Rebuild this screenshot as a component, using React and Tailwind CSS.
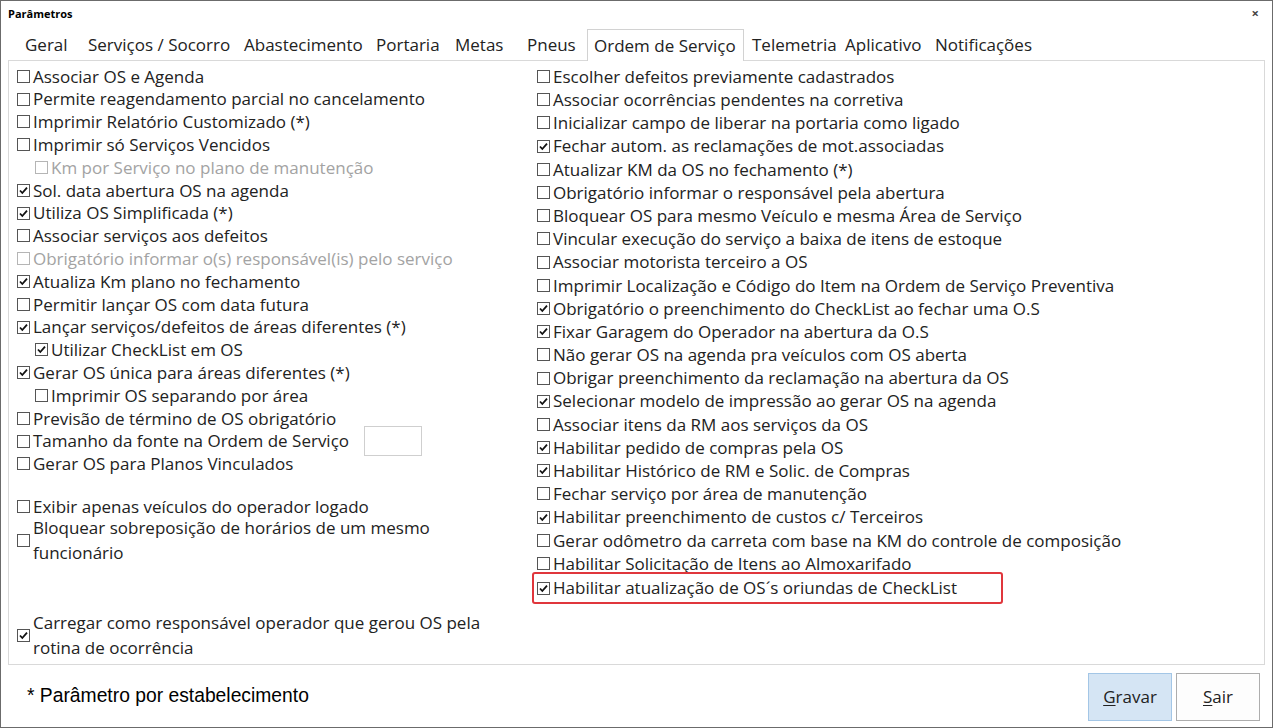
import React from 'react';

const left = [
  { t: 'Associar OS e Agenda' },
  { t: 'Permite reagendamento parcial no cancelamento' },
  { t: 'Imprimir Relatório Customizado (*)' },
  { t: 'Imprimir só Serviços Vencidos' },
  { t: 'Km por Serviço no plano de manutenção', indent: true, disabled: true },
  { t: 'Sol. data abertura OS na agenda', c: true },
  { t: 'Utiliza OS Simplificada (*)', c: true },
  { t: 'Associar serviços aos defeitos' },
  { t: 'Obrigatório informar o(s) responsável(is) pelo serviço', disabled: true },
  { t: 'Atualiza Km plano no fechamento', c: true },
  { t: 'Permitir lançar OS com data futura' },
  { t: 'Lançar serviços/defeitos de áreas diferentes (*)', c: true },
  { t: 'Utilizar CheckList em OS', indent: true, c: true },
  { t: 'Gerar OS única para áreas diferentes (*)', c: true },
  { t: 'Imprimir OS separando por área', indent: true },
  { t: 'Previsão de término de OS obrigatório' },
  { t: 'Tamanho da fonte na Ordem de Serviço', input: true },
  { t: 'Gerar OS para Planos Vinculados' },
];

const right = [
  { t: 'Escolher defeitos previamente cadastrados' },
  { t: 'Associar ocorrências pendentes na corretiva' },
  { t: 'Inicializar campo de liberar na portaria como ligado' },
  { t: 'Fechar autom. as reclamações de mot.associadas', c: true },
  { t: 'Atualizar KM da OS no fechamento (*)' },
  { t: 'Obrigatório informar o responsável pela abertura' },
  { t: 'Bloquear OS para mesmo Veículo e mesma Área de Serviço' },
  { t: 'Vincular execução do serviço a baixa de itens de estoque' },
  { t: 'Associar motorista terceiro a OS' },
  { t: 'Imprimir Localização e Código do Item na Ordem de Serviço Preventiva' },
  { t: 'Obrigatório o preenchimento do CheckList ao fechar uma O.S', c: true },
  { t: 'Fixar Garagem do Operador na abertura da O.S', c: true },
  { t: 'Não gerar OS na agenda pra veículos com OS aberta' },
  { t: 'Obrigar preenchimento da reclamação na abertura da OS' },
  { t: 'Selecionar modelo de impressão ao gerar OS na agenda', c: true },
  { t: 'Associar itens da RM aos serviços da OS' },
  { t: 'Habilitar pedido de compras pela OS', c: true },
  { t: 'Habilitar Histórico de RM e Solic. de Compras', c: true },
  { t: 'Fechar serviço por área de manutenção' },
  { t: 'Habilitar preenchimento de custos c/ Terceiros', c: true },
  { t: 'Gerar odômetro da carreta com base na KM do controle de composição' },
  { t: 'Habilitar Solicitação de Itens ao Almoxarifado' },
];

const tabs = [
  { t: 'Geral', w: 'w-[65px]', pl: 'pl-[8px]' },
  { t: 'Serviços / Socorro', w: 'w-[156px]', pl: 'pl-[6px]' },
  { t: 'Abastecimento', w: 'w-[132px]', pl: 'pl-[6px]' },
  { t: 'Portaria', w: 'w-[78px]', pl: 'pl-[6px]' },
  { t: 'Metas', w: 'w-[72px]', pl: 'pl-[7px]' },
  { t: 'Pneus', w: 'w-[67px]', pl: 'pl-[7px]' },
  { t: 'Ordem de Serviço', w: 'w-[157px]', pl: 'pl-[6px]', active: true },
  { t: 'Telemetria', w: 'w-[95px]', pl: 'pl-[8px]' },
  { t: 'Aplicativo', w: 'w-[90px]', pl: 'pl-[6px]' },
  { t: 'Notificações', w: 'w-[111px]', pl: 'pl-[6px]' },
];

function Box({ checked, disabled }) {
  return (
    <svg width="13" height="13" viewBox="0 0 13 13" className="shrink-0">
      <rect x="0.5" y="0.5" width="12" height="12" fill="#fff" stroke={disabled ? '#b5b5b5' : '#555'} />
      {checked && <path d="M3 6.5 L5.3 9 L10 3.6" fill="none" stroke="#111" strokeWidth="1.8" />}
    </svg>
  );
}

function Row({ item, h }) {
  return (
    <div className={`flex items-center gap-[3px] ${h} ${item.indent ? 'pl-[18px]' : ''}`}>
      <Box checked={item.c} disabled={item.disabled} />
      <span className={`whitespace-nowrap ${item.disabled ? 'text-[#a3a3a3]' : 'text-[#222]'}`}>{item.t}</span>
      {item.input && <div className="ml-[12px] -my-[4px] h-[30px] w-[58px] border border-[#cfcfcf] bg-white" />}
    </div>
  );
}

export default function App() {
  return (
    <div className="w-[1273px] h-[728px] bg-white border border-[#6b6b6b] flex flex-col overflow-hidden" style={{ fontFamily: '"Open Sans", "Noto Sans", sans-serif' }}>
      <div className="h-[28px] flex items-center justify-between px-[7px] pb-[2px]">
        <span className="text-[11px] font-bold text-black">Parâmetros</span>
        <span className="text-[13px] font-bold text-[#444] mr-[6px]">×</span>
      </div>

      <div className="flex pl-[16px] h-[31px] text-[17px] text-[#222]">
        {tabs.map((tab) => (
          <div
            key={tab.t}
            className={`${tab.w} ${tab.pl} flex items-center whitespace-nowrap ${tab.active ? 'border border-b-0 border-[#d2d2d2] bg-white relative z-10 -mb-px' : ''}`}
          >
            {tab.t}
          </div>
        ))}
      </div>

      <div className="mx-[7px] h-[605px] border border-[#d9d9d9] flex pl-[8px] pt-[4px] text-[17px]">
        <div className="w-[520px] flex flex-col">
          {left.map((item) => (
            <Row key={item.t} item={item} h="h-[22.8px]" />
          ))}
          <div className="h-[20px]" />
          <Row item={{ t: 'Exibir apenas veículos do operador logado' }} h="h-[22.8px]" />
          <div className="flex items-center gap-[3px] mt-[-3px] leading-[25px] text-[#222]">
            <Box />
            <span>Bloquear sobreposição de horários de um mesmo<br />funcionário</span>
          </div>
          <div className="h-[45px]" />
          <div className="flex items-center gap-[3px] leading-[25px] text-[#222]">
            <Box checked />
            <span>Carregar como responsável operador que gerou OS pela<br />rotina de ocorrência</span>
          </div>
        </div>
        <div className="flex flex-col">
          {right.map((item) => (
            <Row key={item.t} item={item} h="h-[23.2px]" />
          ))}
          <div className="relative">
            <Row item={{ t: 'Habilitar atualização de OS´s oriundas de CheckList', c: true }} h="h-[26px]" />
            <div className="absolute left-[-5px] top-[-3px] w-[471px] h-[32px] border-2 border-[#e0363c] rounded-[3px]" />
          </div>
        </div>
      </div>

      <div className="flex-1 flex items-center justify-between pl-[26px] pr-[12px]">
        <span className="text-[19.3px] text-black" style={{ fontFamily: '"Liberation Sans", Arial, sans-serif' }}>* Parâmetro por estabelecimento</span>
        <div className="flex gap-[4px] mt-[2px]">
          <button className="w-[84px] h-[48px] bg-[#d5e5f4] border border-[#a3c6e6] text-[17px] text-[#222]">
            <span className="underline underline-offset-2">G</span>ravar
          </button>
          <button className="w-[84px] h-[48px] bg-[#fdfdfd] border border-[#adadad] text-[17px] text-[#222]">
            <span className="underline underline-offset-2">S</span>air
          </button>
        </div>
      </div>
    </div>
  );
}
